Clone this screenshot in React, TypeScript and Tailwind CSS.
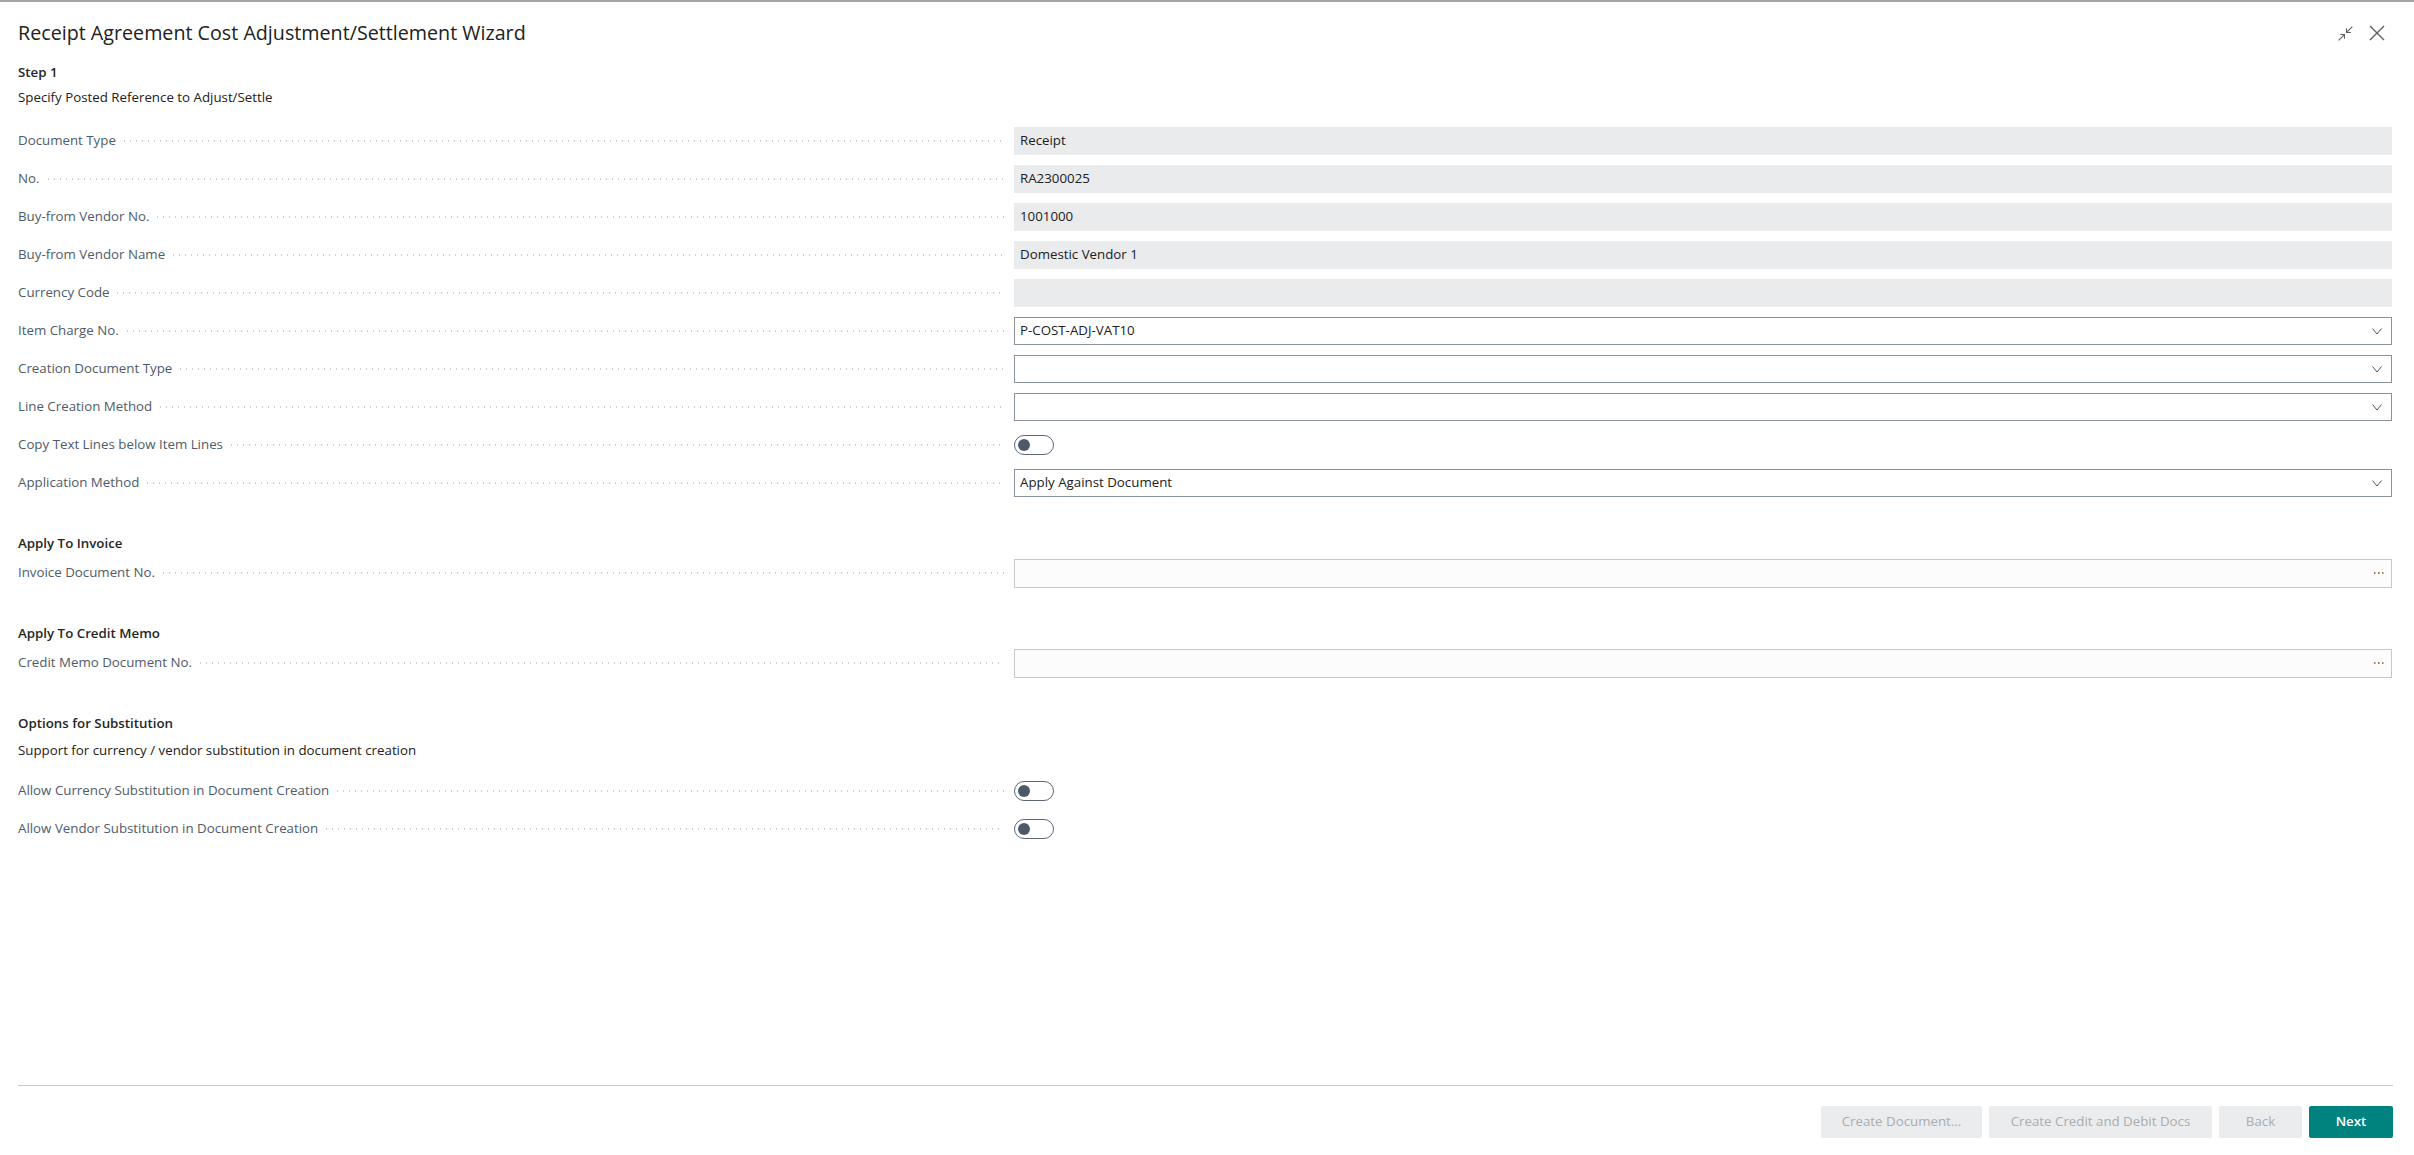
import React from 'react';

type Field =
  | { label: string; kind: 'readonly'; value?: string }
  | { label: string; kind: 'select'; value?: string }
  | { label: string; kind: 'toggle' }
  | { label: string; kind: 'lookup' };

const stepFields: Field[] = [
  { label: 'Document Type', kind: 'readonly', value: 'Receipt' },
  { label: 'No.', kind: 'readonly', value: 'RA2300025' },
  { label: 'Buy-from Vendor No.', kind: 'readonly', value: '1001000' },
  { label: 'Buy-from Vendor Name', kind: 'readonly', value: 'Domestic Vendor 1' },
  { label: 'Currency Code', kind: 'readonly', value: '' },
  { label: 'Item Charge No.', kind: 'select', value: 'P-COST-ADJ-VAT10' },
  { label: 'Creation Document Type', kind: 'select', value: '' },
  { label: 'Line Creation Method', kind: 'select', value: '' },
  { label: 'Copy Text Lines below Item Lines', kind: 'toggle' },
  { label: 'Application Method', kind: 'select', value: 'Apply Against Document' },
];

function Chevron() {
  return (
    <svg width="12" height="12" viewBox="0 0 12 12" className="text-[#50555c]">
      <path d="M1.5 3.5l4.5 5.5 4.5-5.5" fill="none" stroke="currentColor" strokeWidth="1" />
    </svg>
  );
}

function Dots() {
  return (
    <svg width="10" height="4" viewBox="0 0 10 4">
      <rect x="0" y="1" width="1.5" height="2" fill="#b07a45" />
      <rect x="4" y="1" width="1.5" height="2" fill="#7a7a7a" />
      <rect x="8" y="1" width="1.5" height="2" fill="#b07a45" />
    </svg>
  );
}

function Control({ f }: { f: Field }) {
  if (f.kind === 'readonly') {
    return (
      <div className="h-[28px] bg-[#eaebed] flex items-center pl-[6px] text-[13.3px] text-[#212121]">{f.value}</div>
    );
  }
  if (f.kind === 'select') {
    return (
      <div className="h-[28px] bg-white border border-[#8a929c] flex items-center justify-between pl-[5px] pr-[8px] text-[13.3px] text-[#212121]">
        <span>{f.value}</span>
        <Chevron />
      </div>
    );
  }
  if (f.kind === 'lookup') {
    return (
      <div className="h-[29px] bg-[#fcfcfc] border border-[#c8c8c8] flex items-center justify-end pr-[7px]">
        <Dots />
      </div>
    );
  }
  return (
    <div className="h-[20px] w-[40px] rounded-full border border-[#5b6677] flex items-center pl-[3px]">
      <div className="h-[12px] w-[12px] rounded-full bg-[#4d5869]" />
    </div>
  );
}

function Row({ f }: { f: Field }) {
  return (
    <div className="h-[38px] grid grid-cols-[996px_1fr] items-center">
      <div className="flex items-center pr-[10px]">
        <span className="text-[13.3px] text-[#4f5b69] whitespace-nowrap pr-[8px]">{f.label}</span>
        <span className="flex-1 h-[2px] bg-[linear-gradient(to_right,#cdcdcd_1px,transparent_1px)] bg-[length:6px_2px] bg-repeat-x" />
      </div>
      <div className="flex items-center">
        {f.kind === 'toggle' ? <Control f={f} /> : <div className="flex-1"><Control f={f} /></div>}
      </div>
    </div>
  );
}

function Heading({ children, className = '' }: { children: React.ReactNode; className?: string }) {
  return <div className={`h-[20px] leading-[20px] text-[13.3px] font-semibold text-[#262626] ${className}`}>{children}</div>;
}

export default function App() {
  return (
    <div className="h-[1155px] w-full bg-white border-t-2 border-[#a3a3a3] flex flex-col font-['Segoe_UI','Open_Sans',sans-serif] overflow-hidden">
      <div className="flex items-center justify-between pl-[18px] pr-[28px] pt-[16px] h-[46px]">
        <h1 className="text-[19.7px] leading-[28px] text-[#212121]">Receipt Agreement Cost Adjustment/Settlement Wizard</h1>
        <div className="flex items-center gap-[13px] text-[#605e5c]">
          <svg width="19" height="19" viewBox="0 0 18 18">
            <path d="M15.5 2.5l-5.5 5.5M10 4V8h4" fill="none" stroke="currentColor" strokeWidth="1" />
            <path d="M2.5 15.5l5.5-5.5M8 14v-4H4" fill="none" stroke="currentColor" strokeWidth="1" />
          </svg>
          <svg width="18" height="18" viewBox="0 0 18 18">
            <path d="M2 2l14 14M16 2L2 16" fill="none" stroke="currentColor" strokeWidth="1.4" />
          </svg>
        </div>
      </div>

      <div className="pl-[18px] pr-[22px]">
        <Heading className="mt-[14px]">Step 1</Heading>
        <div className="h-[20px] leading-[20px] mt-[5px] text-[13.3px] text-[#212121]">Specify Posted Reference to Adjust/Settle</div>
        <div className="mt-[15px]">
          {stepFields.map(f => <Row key={f.label} f={f} />)}
        </div>

        <Heading className="mt-[31px]">Apply To Invoice</Heading>
        <div className="mt-[1px]">
          <Row f={{ label: 'Invoice Document No.', kind: 'lookup' }} />
        </div>

        <Heading className="mt-[31px]">Apply To Credit Memo</Heading>
        <div className="mt-[1px]">
          <Row f={{ label: 'Credit Memo Document No.', kind: 'lookup' }} />
        </div>

        <Heading className="mt-[31px]">Options for Substitution</Heading>
        <div className="h-[20px] leading-[20px] mt-[7px] text-[13.3px] text-[#212121]">Support for currency / vendor substitution in document creation</div>
        <div className="mt-[12px]">
          <Row f={{ label: 'Allow Currency Substitution in Document Creation', kind: 'toggle' }} />
          <Row f={{ label: 'Allow Vendor Substitution in Document Creation', kind: 'toggle' }} />
        </div>
      </div>

      <div className="mt-auto ml-[18px] mr-[21px] border-t border-[#c8c8c8] pt-[20px] pb-[17px] flex justify-end gap-[7px] text-[13.3px]">
        <button className="h-[32px] w-[161px] rounded-[2px] bg-[#ebecee] text-[#a9acb1]">Create Document...</button>
        <button className="h-[32px] w-[223px] rounded-[2px] bg-[#ebecee] text-[#a9acb1]">Create Credit and Debit Docs</button>
        <button className="h-[32px] w-[83px] rounded-[2px] bg-[#ebecee] text-[#a9acb1]">Back</button>
        <button className="h-[32px] w-[84px] rounded-[2px] bg-[#00827f] text-white font-semibold">Next</button>
      </div>
    </div>
  );
}
